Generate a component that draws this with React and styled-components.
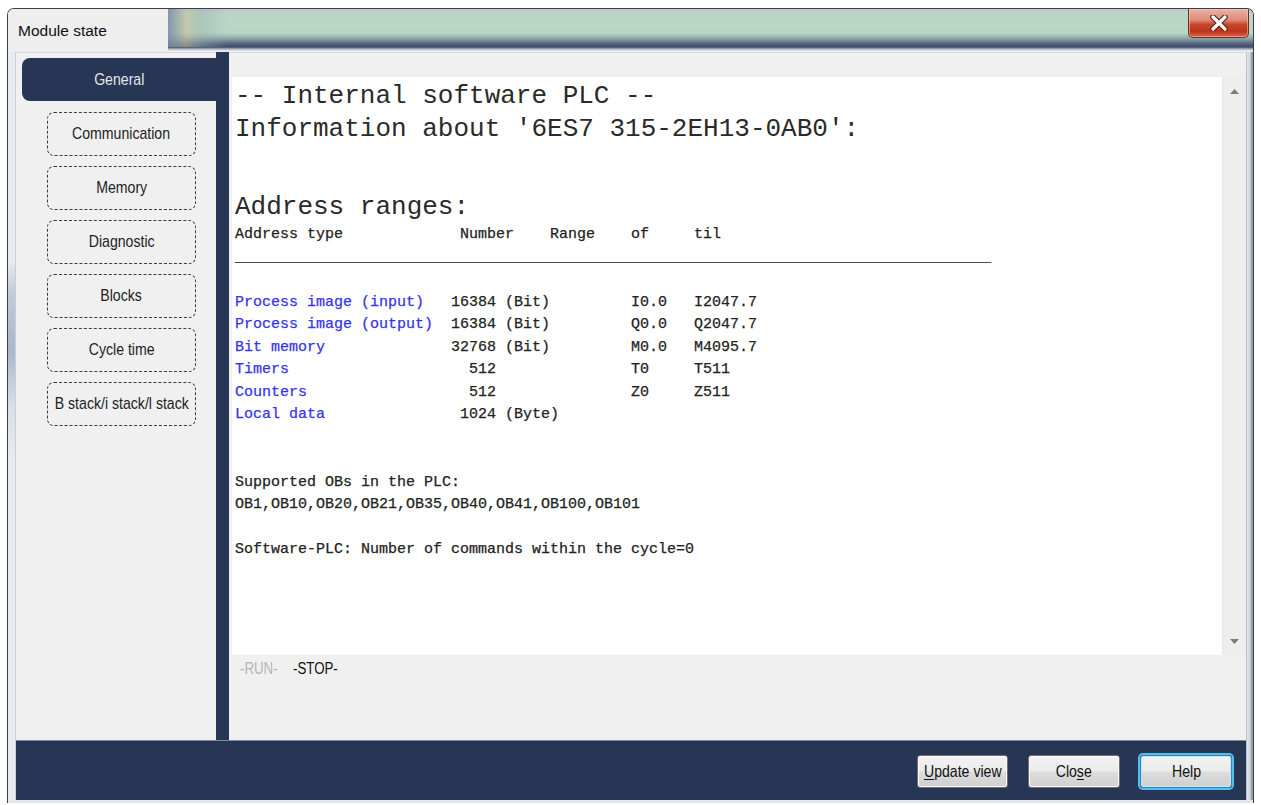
import React from 'react';
import styled, { createGlobalStyle } from 'styled-components';

const NAVY = '#283655';
const UI_FONT = '"Liberation Sans", Arial, sans-serif';
const MONO = '"Liberation Mono", "Courier New", monospace';

const GlobalStyle = createGlobalStyle`
  html, body {
    margin: 0;
    padding: 0;
    background: #ffffff;
  }
  body {
    width: 1261px;
    height: 805px;
    overflow: hidden;
    font-family: ${UI_FONT};
  }
`;

/* narrow dialog font: Liberation Sans squeezed horizontally */
const Narrow = styled.span`
  display: inline-block;
  flex: none;
  font-size: ${(p) => p.$size || 17}px;
  white-space: nowrap;
  transform: scaleX(0.83);
  transform-origin: ${(p) => (p.$left ? 'left center' : 'center')};
`;

const Desktop = styled.div`
  width: 1261px;
  height: 805px;
  box-sizing: border-box;
  padding: 8px 0 0 7px;
  background: #ffffff;
`;

const Window = styled.div`
  width: 1247px;
  height: 795px;
  box-sizing: border-box;
  display: flex;
  flex-direction: column;
  border: 1px solid #3a3f48;
  border-bottom: none;
  border-radius: 7px 7px 0 0;
  overflow: hidden;
  background: #e6ebf0;
`;

/* ---------- title bar ---------- */

const TitleBar = styled.div`
  height: 43px;
  flex: none;
  display: flex;
  align-items: stretch;
  background:
    linear-gradient(to right, rgba(120, 140, 170, 0.85) 0, rgba(200, 190, 150, 0.55) 18px, rgba(150, 175, 175, 0.4) 34px, rgba(0, 0, 0, 0) 60px) 160px 0 / 90px 38px no-repeat,
    linear-gradient(
      to bottom,
      #c3c8ce 0,
      #c3c8ce 2px,
      #bcd6c6 5px,
      #b8d6c4 24px,
      #93abaa 29px,
      #52617f 35px,
      #3b4a68 38px,
      #a9b3c1 40px,
      #eceef1 42px
    );
`;

const Caption = styled.div`
  width: 160px;
  flex: none;
  display: flex;
  align-items: center;
  padding-left: 10px;
  box-sizing: border-box;
  background: #eeeeee;
  font-size: 15.5px;
  color: #111;
`;

const GlassFill = styled.div`
  flex: 1;
`;

const CloseButton = styled.div`
  width: 61px;
  height: 29px;
  margin-right: 4px;
  align-self: flex-start;
  box-sizing: border-box;
  border: 1px solid #7d2a1c;
  border-top: none;
  border-radius: 0 0 5px 5px;
  background: linear-gradient(to bottom, #eab3a4 0, #dc8a74 40%, #c8472e 55%, #c0331c 80%, #d4664b 100%);
  box-shadow: inset 0 0 0 1px rgba(255, 210, 200, 0.5);
  display: flex;
  align-items: center;
  justify-content: center;
`;

/* ---------- frame + client ---------- */

const Body = styled.div`
  flex: 1;
  display: flex;
  min-height: 0;
`;

const LeftFrame = styled.div`
  width: 8px;
  flex: none;
  background: linear-gradient(
    to bottom,
    #e9ecef 0,
    #e9ecef 28%,
    #c2ccda 32%,
    #a8b7cc 40%,
    #d6dde6 47%,
    #e9ecef 55%,
    #e9ecef 100%
  );
  box-shadow: inset -1px 0 0 #c9ced4;
`;

const RightFrame = styled.div`
  width: 7px;
  flex: none;
  background: linear-gradient(to right, #9aa3ae 0, #dfe5ec 1px, #cdd5df 4px, #8b95a3 6px);
`;

const BottomFrame = styled.div`
  height: 3px;
  flex: none;
  background: #e3e8ee;
`;

const Client = styled.div`
  flex: 1;
  display: flex;
  flex-direction: column;
  min-width: 0;
`;

const Main = styled.div`
  flex: 1;
  display: flex;
  min-height: 0;
`;

/* ---------- left navigation ---------- */

const Sidebar = styled.nav`
  width: 200px;
  flex: none;
  box-sizing: border-box;
  background: #f0f0f0;
  border-top: 1px solid #d9d9d9;
  padding-top: 5px;
  display: flex;
  flex-direction: column;
`;

const ActiveTab = styled.div`
  height: 43px;
  margin-left: 6px;
  border-radius: 8px 0 0 8px;
  background: ${NAVY};
  color: #e4e6ea;
  display: flex;
  align-items: center;
  justify-content: center;
`;

const TabList = styled.div`
  margin: 11px 0 0 31px;
  display: flex;
  flex-direction: column;
  gap: 10px;
`;

const Tab = styled.div`
  width: 149px;
  height: 44px;
  box-sizing: border-box;
  border: 1px dashed #3c3c3c;
  border-radius: 7px;
  display: flex;
  align-items: center;
  justify-content: center;
  color: #1e1e1e;
`;

const Separator = styled.div`
  width: 13px;
  flex: none;
  background: ${NAVY};
`;

/* ---------- content ---------- */

const Content = styled.section`
  flex: 1;
  min-width: 0;
  background: #f0f0f0;
  border-top: 1px solid #d9d9d9;
  box-sizing: border-box;
  padding: 24px 0 0 3px;
  display: flex;
  flex-direction: column;
`;

const TextPanel = styled.div`
  height: 578px;
  display: flex;
`;

const TextBox = styled.div`
  flex: 1;
  min-width: 0;
  background: #ffffff;
  padding: 3px 0 0 3px;
  overflow: hidden;
  color: #222222;
  font-family: ${MONO};
`;

const BigLine = styled.div`
  font-size: 26px;
  line-height: 33px;
  height: 33px;
  white-space: pre;
  color: #2a2a2a;
`;

const Line = styled.div`
  font-size: 15px;
  line-height: 22.5px;
  height: 22.5px;
  white-space: pre;
  -webkit-text-stroke: 0.25px currentColor;
`;

const Label = styled.span`
  color: ${(p) => (p.$link ? '#3434ec' : 'inherit')};
`;

const ScrollBar = styled.div`
  width: 24px;
  flex: none;
  background: #eeeeee;
  box-shadow: inset 1px 0 0 #e6e6e6;
  display: flex;
  flex-direction: column;
  justify-content: space-between;
`;

const ArrowSlot = styled.div`
  height: 28px;
  display: flex;
  align-items: center;
  justify-content: center;
`;

const StatusRow = styled.div`
  height: 28px;
  padding-left: 8px;
  display: flex;
  align-items: center;
  gap: 8px;
`;

const Status = styled(Narrow)`
  color: ${(p) => (p.$active ? '#111111' : '#b5b5b5')};
  margin-right: ${(p) => (p.$active ? 0 : 0)}px;
`;

/* ---------- footer ---------- */

const Footer = styled.footer`
  height: 60px;
  flex: none;
  box-sizing: border-box;
  background: ${NAVY};
  border-top: 1px solid #7f8898;
  padding: 2px 14px 0 0;
  display: flex;
  align-items: center;
  justify-content: flex-end;
  gap: 20px;
`;

const Button = styled.button`
  width: ${(p) => p.$w}px;
  height: 33px;
  box-sizing: border-box;
  padding: 0;
  border: 1px solid ${(p) => (p.$default ? '#3c7fb1' : '#707070')};
  border-radius: 3px;
  background: linear-gradient(to bottom, #f3f3f3 0, #ebebeb 48%, #dddddd 52%, #cfcfcf 100%);
  box-shadow: ${(p) =>
    p.$default
      ? '0 0 0 2px #4cc2f0, inset 0 0 0 1px #bfe8fa'
      : 'inset 0 0 0 1px #fbfbfb'};
  font-family: ${UI_FONT};
  color: #111111;
  cursor: default;
  display: flex;
  align-items: center;
  justify-content: center;
  overflow: visible;

  u {
    text-decoration: underline;
    text-underline-offset: 2px;
  }
`;

/* ---------- data ---------- */

const ranges = [
  { label: 'Process image (input)', num: '16384', unit: '(Bit)', of: 'I0.0', til: 'I2047.7' },
  { label: 'Process image (output)', num: '16384', unit: '(Bit)', of: 'Q0.0', til: 'Q2047.7' },
  { label: 'Bit memory', num: '32768', unit: '(Bit)', of: 'M0.0', til: 'M4095.7' },
  { label: 'Timers', num: '512', unit: '', of: 'T0', til: 'T511' },
  { label: 'Counters', num: '512', unit: '', of: 'Z0', til: 'Z511' },
  { label: 'Local data', num: '1024', unit: '(Byte)', of: '', til: '' },
];

const tabs = ['Communication', 'Memory', 'Diagnostic', 'Blocks', 'Cycle time', 'B stack/i stack/l stack'];

const header =
  'Address type'.padEnd(25) + 'Number'.padEnd(10) + 'Range'.padEnd(9) + 'of'.padEnd(7) + 'til';

function Arrow({ up }) {
  return (
    <svg width="9" height="5" viewBox="0 0 9 5">
      <path d={up ? 'M0 5 L4.5 0 L9 5 Z' : 'M0 0 L4.5 5 L9 0 Z'} fill="#7a7a7a" />
    </svg>
  );
}

function CloseGlyph() {
  return (
    <svg width="20" height="16" viewBox="0 0 20 16">
      <path d="M4 2 L16 14 M16 2 L4 14" stroke="#5a1e16" strokeWidth="5.5" strokeLinecap="round" />
      <path d="M4 2 L16 14 M16 2 L4 14" stroke="#ffffff" strokeWidth="3.2" strokeLinecap="round" />
    </svg>
  );
}

export default function App() {
  return (
    <>
      <GlobalStyle />
      <Desktop>
        <Window>
          <TitleBar>
            <Caption>Module state</Caption>
            <GlassFill />
            <CloseButton>
              <CloseGlyph />
            </CloseButton>
          </TitleBar>

          <Body>
            <LeftFrame />
            <Client>
              <Main>
                <Sidebar>
                  <ActiveTab>
                    <Narrow>General</Narrow>
                  </ActiveTab>
                  <TabList>
                    {tabs.map((t) => (
                      <Tab key={t}>
                        <Narrow>{t}</Narrow>
                      </Tab>
                    ))}
                  </TabList>
                </Sidebar>

                <Separator />

                <Content>
                  <TextPanel>
                    <TextBox>
                      <BigLine>-- Internal software PLC --</BigLine>
                      <BigLine>Information about '6ES7 315-2EH13-0AB0':</BigLine>
                      <Line />
                      <Line />
                      <BigLine>Address ranges:</BigLine>
                      <Line>{header}</Line>
                      <Line>{'_'.repeat(84)}</Line>
                      <Line />
                      {ranges.map((r) => (
                        <Line key={r.label}>
                          <Label $link>{r.label}</Label>
                          {' '.repeat(24 - r.label.length) +
                            r.num.padStart(5) +
                            ' ' +
                            r.unit.padEnd(14) +
                            r.of.padEnd(7) +
                            r.til}
                        </Line>
                      ))}
                      <Line />
                      <Line />
                      <Line>Supported OBs in the PLC:</Line>
                      <Line>OB1,OB10,OB20,OB21,OB35,OB40,OB41,OB100,OB101</Line>
                      <Line />
                      <Line>Software-PLC: Number of commands within the cycle=0</Line>
                    </TextBox>
                    <ScrollBar>
                      <ArrowSlot>
                        <Arrow up />
                      </ArrowSlot>
                      <ArrowSlot>
                        <Arrow />
                      </ArrowSlot>
                    </ScrollBar>
                  </TextPanel>

                  <StatusRow>
                    <Status $size={16} $left>-RUN-</Status>
                    <Status $size={16} $left $active>-STOP-</Status>
                  </StatusRow>
                </Content>
              </Main>

              <Footer>
                <Button $w={91}>
                  <Narrow>
                    <u>U</u>pdate view
                  </Narrow>
                </Button>
                <Button $w={92}>
                  <Narrow>
                    Clo<u>s</u>e
                  </Narrow>
                </Button>
                <Button $w={92} $default>
                  <Narrow>Help</Narrow>
                </Button>
              </Footer>
            </Client>
            <RightFrame />
          </Body>
          <BottomFrame />
        </Window>
      </Desktop>
    </>
  );
}
